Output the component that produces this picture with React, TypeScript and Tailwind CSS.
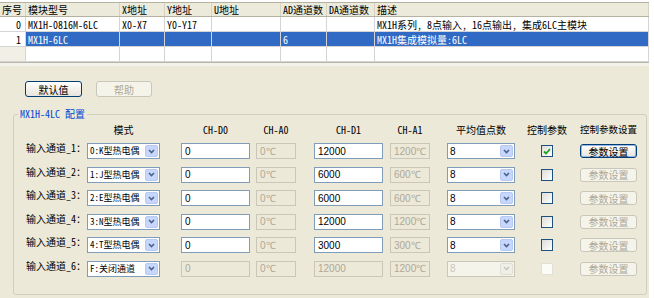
import React from "react";

const CJK = "font-['Noto_Sans_Mono_CJK_SC','Noto_Sans_CJK_SC',sans-serif]";
const SANS = "font-['Liberation_Sans',Arial,sans-serif]";

const colW = ["w-[26px]", "w-[94px]", "w-[45px]", "w-[47px]", "w-[69px]", "w-[46px]", "w-[48px]", "w-[274px]"];
const headers = ["序号", "模块型号", "X地址", "Y地址", "U地址", "AD通道数", "DA通道数", "描述"];
const gridRows = [
  ["0", "MX1H-0816M-6LC", "X0-X7", "Y0-Y17", "", "", "", "MX1H系列, 8点输入, 16点输出, 集成6LC主模块"],
  ["1", "MX1H-6LC", "", "", "", "6", "", "MX1H集成模拟量:6LC"],
  ["", "", "", "", "", "", "", ""],
];

const channels = [
  { mode: "0:K型热电偶", d0: "0", a0: "0℃", d1: "12000", a1: "1200℃", checked: true, off: false },
  { mode: "1:J型热电偶", d0: "0", a0: "0℃", d1: "6000", a1: "600℃", checked: false, off: false },
  { mode: "2:E型热电偶", d0: "0", a0: "0℃", d1: "6000", a1: "600℃", checked: false, off: false },
  { mode: "3:N型热电偶", d0: "0", a0: "0℃", d1: "12000", a1: "1200℃", checked: false, off: false },
  { mode: "4:T型热电偶", d0: "0", a0: "0℃", d1: "3000", a1: "300℃", checked: false, off: false },
  { mode: "F:关闭通道", d0: "0", a0: "0℃", d1: "12000", a1: "1200℃", checked: false, off: true },
];

function Grid() {
  return (
    <div className={`${CJK} text-[10px] text-black`}>
      <div className="h-[2px] bg-white" />
      <div className="flex h-[15px] bg-[#ebeadb] border-t border-b border-[#b5b2a2]">
        {headers.map((h, i) => (
          <div key={i} className={`${colW[i]} shrink-0 h-full flex items-center px-[2px] border-r border-[#d6d3c4] whitespace-nowrap`}>
            {h}
          </div>
        ))}
      </div>
      {gridRows.map((row, r) => (
        <div key={r} className={`flex h-[15px] border-b border-[#d4d4d4] ${r === 1 ? "bg-[#316ac5] text-white" : "bg-white"}`}>
          {row.map((c, i) => (
            <div
              key={i}
              className={`${colW[i]} shrink-0 h-full flex items-center whitespace-nowrap overflow-hidden border-r border-[#d4d4d4] ${
                i === 0 ? `justify-end pr-[4px] text-black ${r === 2 ? "bg-[#f1efe6]" : "bg-white"}` : "px-[2px]"
              }`}
            >
              {c}
            </div>
          ))}
        </div>
      ))}
      <div className="h-[4px] bg-[#f3f2ea] border-t border-[#b9b7aa]" />
    </div>
  );
}

function Field({ value, className, disabled }: { value: string; className: string; disabled?: boolean }) {
  return (
    <div
      className={`${className} h-[16px] shrink-0 border flex items-center pl-[3px] text-[10px] ${SANS} ${
        disabled ? "border-[#c9c7ba] bg-[#ece9d8] text-[#aca899]" : "border-[#7f9db9] bg-white text-black"
      }`}
    >
      {value}
    </div>
  );
}

function Combo({ value, className, disabled, font }: { value: string; className: string; disabled?: boolean; font: string }) {
  return (
    <div
      className={`${className} h-[16px] shrink-0 border flex items-center ${
        disabled ? "border-[#c9c7ba] bg-[#f5f4ea] text-[#c9c7ba]" : "border-[#7f9db9] bg-white text-black"
      }`}
    >
      <span className={`flex-1 pl-[2px] whitespace-nowrap overflow-hidden ${font}`}>{value}</span>
      <span
        className={`w-[13px] h-[12px] mr-[1px] shrink-0 rounded-[2px] border flex items-center justify-center ${
          disabled ? "bg-[#f0efe7] border-[#e0ded3]" : "bg-[#c6d6fc] border-[#b7c9f2]"
        }`}
      >
        <svg width="7" height="5" viewBox="0 0 7 5">
          <path d="M1 1 L3.5 3.5 L6 1" fill="none" stroke={disabled ? "#c9c7ba" : "#4d6185"} strokeWidth="1.6" />
        </svg>
      </span>
    </div>
  );
}

function Check({ checked, disabled }: { checked?: boolean; disabled?: boolean }) {
  return (
    <div className="w-[64px] shrink-0 flex justify-center">
      <div
        className={`w-[12px] h-[12px] border flex items-center justify-center ${
          disabled ? "border-[#e2e0d6] bg-[#fbfbf8]" : "border-[#1c5180] bg-gradient-to-br from-[#dcdcd7] to-white"
        }`}
      >
        {checked && (
          <svg width="8" height="7" viewBox="0 0 8 7">
            <path d="M1 3.5 L3 5.5 L7 1.2" fill="none" stroke="#21a121" strokeWidth="1.8" />
          </svg>
        )}
      </div>
    </div>
  );
}

function XpButton({ label, className, disabled, focused }: { label: string; className: string; disabled?: boolean; focused?: boolean }) {
  return (
    <div
      className={`${className} shrink-0 flex items-center justify-center rounded-[3px] border text-[10px] ${CJK} ${
        disabled
          ? "border-[#c9c7ba] bg-[#f5f4ea] text-[#aca899]"
          : "border-[#003c74] bg-gradient-to-b from-white to-[#e6e4dc] text-black"
      } ${focused ? "shadow-[inset_0_0_0_1px_#98b8ea]" : ""}`}
    >
      {label}
    </div>
  );
}

export default function App() {
  return (
    <div className="w-[654px] h-[298px] bg-white overflow-hidden">
      <div className="w-[649px] h-full bg-[#ece9d8] flex flex-col">
        <Grid />

        <div className="flex gap-[14px] pl-[25px] mt-[15px]">
          <XpButton label="默认值" className="w-[57px] h-[16px]" />
          <XpButton label="帮助" className="w-[56px] h-[16px]" disabled />
        </div>

        <div className="relative ml-[13px] mt-[17px] mb-[3px] w-[634px] flex-1 border border-[#d0d0bf] rounded-[3px] pt-[8px]">
          <span className={`absolute -top-[7px] left-[4px] px-[2px] bg-[#ece9d8] text-[10px] leading-[12px] text-[#0046d5] ${CJK}`}>
            MX1H-4LC 配置
          </span>

          <div className={`flex h-[12px] items-center text-[10px] text-black ${CJK}`}>
            <div className="w-[73px] shrink-0" />
            <div className="w-[73px] shrink-0 text-center">模式</div>
            <div className="w-[69px] ml-[21px] shrink-0 text-center">CH-D0</div>
            <div className="w-[40px] ml-[6px] shrink-0 text-center">CH-A0</div>
            <div className="w-[69px] ml-[18px] shrink-0 text-center">CH-D1</div>
            <div className="w-[40px] ml-[7px] shrink-0 text-center">CH-A1</div>
            <div className="w-[68px] ml-[17px] shrink-0 text-center">平均值点数</div>
            <div className="w-[64px] shrink-0 text-center">控制参数</div>
            <div className="w-[57px] ml-[1px] shrink-0 text-center whitespace-nowrap text-[9.5px]">控制参数设置</div>
          </div>

          <div className="flex flex-col gap-[7.5px] mt-[8px]">
            {channels.map((c, i) => (
              <div key={i} className="flex items-center h-[16px]">
                <div className={`w-[73px] shrink-0 self-start -mt-[1px] text-right pr-[1px] text-[10px] leading-[12px] whitespace-nowrap text-black ${CJK}`}>
                  输入通道_{i + 1}：
                </div>
                <Combo value={c.mode} className="w-[73px] text-[9px]" font={CJK} />
                <Field value={c.d0} className="w-[69px] ml-[21px]" disabled={c.off} />
                <Field value={c.a0} className="w-[40px] ml-[6px]" disabled />
                <Field value={c.d1} className="w-[69px] ml-[18px]" disabled={c.off} />
                <Field value={c.a1} className="w-[40px] ml-[7px]" disabled />
                <Combo value="8" className="w-[68px] ml-[17px] text-[10px]" font={SANS} disabled={c.off} />
                <Check checked={c.checked} disabled={c.off} />
                <XpButton label="参数设置" className="w-[57px] h-[14px] ml-[1px]" disabled={!c.checked} focused={c.checked} />
              </div>
            ))}
          </div>
        </div>
      </div>
    </div>
  );
}
